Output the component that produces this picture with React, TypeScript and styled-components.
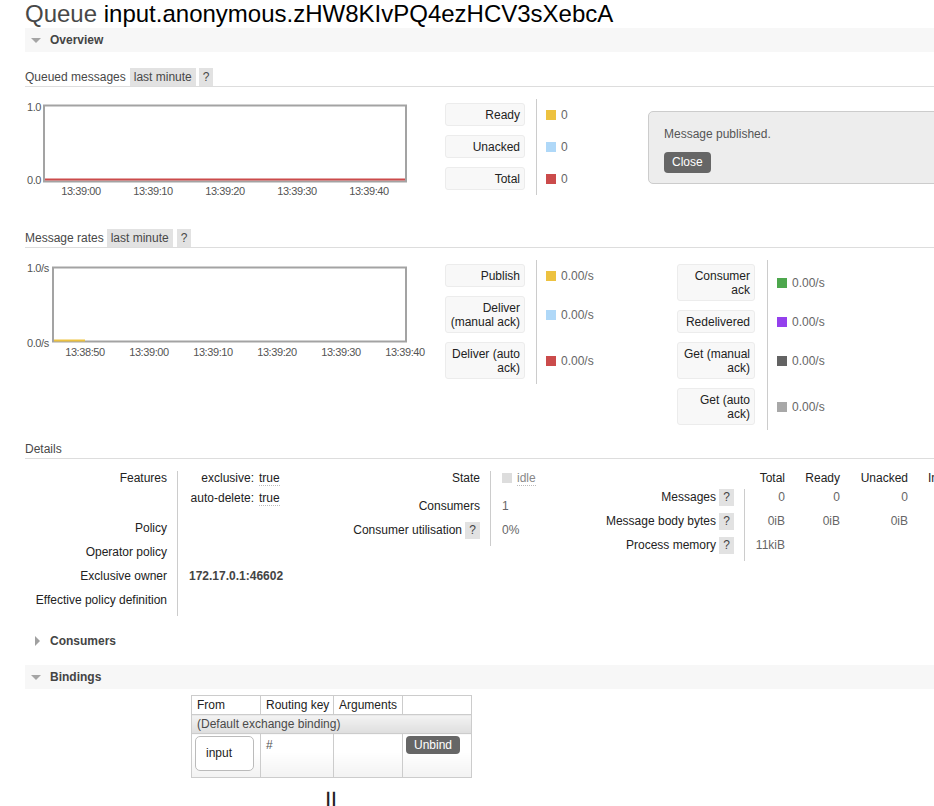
import React from 'react';
import styled, { createGlobalStyle, css } from 'styled-components';

const GlobalStyle = createGlobalStyle`
    html, body {
        margin: 0;
        padding: 0;
        overflow: hidden;
        background: #fff;
    }
    body {
        font-family: "Liberation Sans", Arial, Helvetica, sans-serif;
        font-size: 12px;
        color: #484848;
    }
`;

const Page = styled.div`
    position: relative;
    width: 1100px;
    height: 806px;
    padding-left: 25px;
    box-sizing: border-box;
`;

const Title = styled.h1`
    margin: 0;
    font-size: 24px;
    line-height: 28px;
    font-weight: normal;
    color: #484848;
    white-space: nowrap;
    b {
        font-weight: normal;
        color: #000;
    }
`;

const SectionHeader = styled.h2<{ $open?: boolean; $mt?: number }>`
    margin: ${(p) => p.$mt ?? 0}px 0 0;
    height: 24px;
    display: flex;
    align-items: center;
    background: ${(p) => (p.$open ? '#f7f7f7' : 'transparent')};
    font-size: 12px;
    font-weight: bold;
    color: #444;
`;

const Toggle = styled.span<{ $open?: boolean }>`
    width: 0;
    height: 0;
    ${(p) =>
        p.$open
            ? css`
                  margin: 1px 9px 0 6px;
                  border-left: 5px solid transparent;
                  border-right: 5px solid transparent;
                  border-top: 5px solid #a5a5a5;
              `
            : css`
                  margin: 0 10px;
                  border-top: 5px solid transparent;
                  border-bottom: 5px solid transparent;
                  border-left: 5px solid #a0a0a0;
              `}
`;

const SubHeader = styled.h3<{ $mt: number }>`
    margin: ${(p) => p.$mt}px 0 0;
    display: flex;
    height: 18px;
    line-height: 18px;
    font-size: 12px;
    font-weight: normal;
    color: #484848;
    border-bottom: 1px solid #ddd;
`;

const Pill = styled.span<{ $ml?: number }>`
    margin-left: ${(p) => p.$ml ?? 4}px;
    padding: 0 4px;
    background: #e2e2e2;
    color: #484848;
`;

const ChartRow = styled.div<{ $mt: number }>`
    margin-top: ${(p) => p.$mt}px;
    display: flex;
    align-items: flex-start;
`;

const ChartSvg = styled.svg`
    display: block;
    flex: none;
    font-family: "Liberation Sans", Arial, sans-serif;
    font-size: 11px;
    letter-spacing: -0.4px;
    fill: #545454;
`;

const Legend = styled.div<{ $label: number; $value?: number }>`
    display: grid;
    grid-template-columns: ${(p) => p.$label}px ${(p) => (p.$value ? `${p.$value}px` : 'auto')};
    flex: none;
`;

const KeyCell = styled.div`
    padding: 4px 0 5px;
`;

const KeyBox = styled.div<{ $w: number }>`
    box-sizing: border-box;
    width: ${(p) => p.$w}px;
    padding: 4px 4px 3px;
    border: 1px solid #ececec;
    border-radius: 3px;
    background: #f8f8f8;
    text-align: right;
    line-height: 14px;
    color: #222;
`;

const ValueCell = styled.div`
    border-left: 1px solid #ccc;
    padding: 4px 0 5px 9px;
    display: flex;
    align-items: center;
    gap: 5px;
    color: #666;
    line-height: 14px;
    white-space: nowrap;
`;

const Swatch = styled.span<{ $c: string }>`
    flex: none;
    width: 10px;
    height: 10px;
    background: ${(p) => p.$c};
`;

const Popup = styled.div`
    position: absolute;
    left: 648px;
    top: 111px;
    width: 320px;
    height: 73px;
    box-sizing: border-box;
    padding: 15px 15px 0;
    background: #ededed;
    border: 1px solid #ccc;
    border-radius: 5px;
    color: #555;
    p {
        margin: 0 0 11px;
        line-height: 14px;
    }
`;

const DarkButton = styled.button<{ $h: number }>`
    display: inline-block;
    height: ${(p) => p.$h}px;
    line-height: ${(p) => p.$h}px;
    padding: 0 8px;
    border: none;
    border-radius: 4px;
    background: #666;
    color: #fff;
    font-family: inherit;
    font-size: 12px;
`;

const FactsRow = styled.div`
    margin-top: 12px;
    display: flex;
    align-items: flex-start;
`;

const Facts = styled.div<{ $cols: string; $rows: string }>`
    display: grid;
    grid-template-columns: ${(p) => p.$cols};
    grid-template-rows: ${(p) => p.$rows};
    line-height: 14px;
    flex: none;
    white-space: nowrap;
`;

const FactLabel = styled.div<{ $pt?: number }>`
    display: flex;
    justify-content: flex-end;
    align-items: flex-start;
    gap: 3px;
    padding: ${(p) => p.$pt ?? 0}px 10px 0 0;
    color: #222;
`;

const FactValue = styled.div<{ $line?: boolean; $right?: boolean; $pt?: number }>`
    padding: ${(p) => p.$pt ?? 0}px ${(p) => (p.$right ? '10px 0 0' : '0 0 11px')};
    text-align: ${(p) => (p.$right ? 'right' : 'left')};
    border-left: ${(p) => (p.$line ? '1px solid #ccc' : 'none')};
    color: #666;
`;

const ColHead = styled.div<{ $left?: boolean }>`
    padding: ${(p) => (p.$left ? '0 0 0 10px' : '0 10px 0 0')};
    text-align: ${(p) => (p.$left ? 'left' : 'right')};
    color: #222;
`;

const Help = styled.span`
    display: inline-block;
    width: 15px;
    height: 17px;
    line-height: 17px;
    margin-top: -1px;
    text-align: center;
    background: #e2e2e2;
    color: #444;
`;

const FeatureList = styled.div`
    display: grid;
    grid-template-columns: 65px auto;
    column-gap: 5px;
    row-gap: 6px;
    span:nth-child(odd) {
        text-align: right;
        color: #222;
    }
`;

const Abbr = styled.span`
    color: #888;
    border-bottom: 1px dotted #bbb;
`;

const Owner = styled.b`
    color: #444;
`;

const StateDot = styled.span`
    display: inline-block;
    width: 10px;
    height: 10px;
    margin: 2px 5px 0 0;
    background: #ddd;
    vertical-align: top;
`;

const BindingsWrap = styled.div`
    margin: 6px 0 0 166px;
    width: 280px;
`;

const BindingsTable = styled.table`
    border-collapse: collapse;
    table-layout: fixed;
    width: 280px;
    border: 1px solid #ccc;
    line-height: 14px;
    th,
    td {
        border: 1px solid #ccc;
        padding: 2px 5px;
        text-align: left;
        vertical-align: top;
        font-weight: normal;
        white-space: nowrap;
    }
    th {
        color: #222;
    }
`;

const DefaultRow = styled.td`
    background: linear-gradient(#f3f3f3, #dedede);
    color: #4a4a4a;
`;

const BindingRow = styled.tr`
    height: 44px;
    td {
        padding: 2px 3px;
        background: linear-gradient(#fff 40%, #f2f2f2);
        color: #555;
    }
`;

const ExchangeBox = styled.div`
    box-sizing: border-box;
    width: 59px;
    height: 35px;
    line-height: 33px;
    padding-left: 10px;
    border: 1px solid #bbb;
    border-radius: 5px;
    background: #fff;
    color: #222;
`;

const RoutingKey = styled.div`
    padding: 2px 0 0 2px;
`;

const Arrow = styled.div`
    margin-top: 13px;
    text-align: center;
    font-family: "DejaVu Sans", sans-serif;
    font-size: 36px;
    line-height: 30px;
    color: #222;
`;

type ChartProps = {
    height: number;
    box: { x: number; y: number; w: number; h: number };
    yLabels: { label: string; y: number }[];
    ticks: { x: number; label: string }[];
    tickY: number;
    line: { x1: number; x2: number; y: number; color: string };
};

function Chart({ height, box, yLabels, ticks, tickY, line }: ChartProps) {
    return (
        <ChartSvg width={420} height={height} viewBox={`0 0 420 ${height}`}>
            <rect x={box.x} y={box.y} width={box.w} height={box.h} fill="#fff" stroke="#a3a3a3" strokeWidth={2} />
            <line x1={line.x1} x2={line.x2} y1={line.y} y2={line.y} stroke={line.color} strokeWidth={2} />
            {yLabels.map((l) => (
                <text key={l.label} x={2} y={l.y}>
                    {l.label}
                </text>
            ))}
            {ticks.map((t) => (
                <text key={t.label} x={t.x} y={tickY} textAnchor="middle">
                    {t.label}
                </text>
            ))}
        </ChartSvg>
    );
}

type LegendItem = { label: string; value: string; color: string };

function LegendTable({ items, label, box, value }: { items: LegendItem[]; label: number; box: number; value?: number }) {
    return (
        <Legend $label={label} $value={value}>
            {items.map((item) => (
                <React.Fragment key={item.label}>
                    <KeyCell>
                        <KeyBox $w={box}>{item.label}</KeyBox>
                    </KeyCell>
                    <ValueCell>
                        <Swatch $c={item.color} />
                        {item.value}
                    </ValueCell>
                </React.Fragment>
            ))}
        </Legend>
    );
}

const queued: LegendItem[] = [
    { label: 'Ready', value: '0', color: '#edc240' },
    { label: 'Unacked', value: '0', color: '#afd8f8' },
    { label: 'Total', value: '0', color: '#cb4b4b' },
];

const ratesLeft: LegendItem[] = [
    { label: 'Publish', value: '0.00/s', color: '#edc240' },
    { label: 'Deliver (manual ack)', value: '0.00/s', color: '#afd8f8' },
    { label: 'Deliver (auto ack)', value: '0.00/s', color: '#cb4b4b' },
];

const ratesRight: LegendItem[] = [
    { label: 'Consumer ack', value: '0.00/s', color: '#4da74d' },
    { label: 'Redelivered', value: '0.00/s', color: '#9440ed' },
    { label: 'Get (manual ack)', value: '0.00/s', color: '#636363' },
    { label: 'Get (auto ack)', value: '0.00/s', color: '#a8a8a8' },
];

const statColumns = ['Total', 'Ready', 'Unacked', 'In memory', 'Persistent', 'Transient'];
const statRows = [
    { label: 'Messages', values: ['0', '0', '0', '0', '0', '0'] },
    { label: 'Message body bytes', values: ['0iB', '0iB', '0iB', '0iB', '0iB', '0iB'] },
    { label: 'Process memory', values: ['11kiB', '', '', '', '', ''] },
];

function App() {
    return (
        <Page>
            <GlobalStyle />
            <Title>
                Queue <b>input.anonymous.zHW8KIvPQ4ezHCV3sXebcA</b>
            </Title>

            <SectionHeader $open>
                <Toggle $open />
                Overview
            </SectionHeader>

            <SubHeader $mt={16}>
                Queued messages
                <Pill>last minute</Pill>
                <Pill $ml={3}>?</Pill>
            </SubHeader>
            <ChartRow $mt={12}>
                <Chart
                    height={96}
                    box={{ x: 19, y: 6.5, w: 362, h: 76 }}
                    yLabels={[
                        { label: '1.0', y: 12 },
                        { label: '0.0', y: 85 },
                    ]}
                    ticks={[
                        { x: 56, label: '13:39:00' },
                        { x: 128, label: '13:39:10' },
                        { x: 200, label: '13:39:20' },
                        { x: 272, label: '13:39:30' },
                        { x: 344, label: '13:39:40' },
                    ]}
                    tickY={95.5}
                    line={{ x1: 20, x2: 380, y: 80.5, color: '#cb4b4b' }}
                />
                <LegendTable items={queued} label={91} box={80} />
            </ChartRow>

            <SubHeader $mt={34}>
                Message rates
                <Pill $ml={3}>last minute</Pill>
                <Pill>?</Pill>
            </SubHeader>
            <ChartRow $mt={12}>
                <Chart
                    height={100}
                    box={{ x: 28, y: 7.5, w: 353, h: 74 }}
                    yLabels={[
                        { label: '1.0/s', y: 12 },
                        { label: '0.0/s', y: 86.5 },
                    ]}
                    ticks={[
                        { x: 60, label: '13:38:50' },
                        { x: 124, label: '13:39:00' },
                        { x: 188, label: '13:39:10' },
                        { x: 252, label: '13:39:20' },
                        { x: 316, label: '13:39:30' },
                        { x: 380, label: '13:39:40' },
                    ]}
                    tickY={96}
                    line={{ x1: 29, x2: 60, y: 80.5, color: '#edc240' }}
                />
                <LegendTable items={ratesLeft} label={91} box={80} value={141} />
                <LegendTable items={ratesRight} label={90} box={78} />
            </ChartRow>

            <SubHeader $mt={10}>Details</SubHeader>
            <FactsRow>
                <Facts $cols="152px 148px" $rows="49px 24px 24px 24px 24px">
                    <FactLabel>Features</FactLabel>
                    <FactValue $line>
                        <FeatureList>
                            <span>exclusive:</span>
                            <span>
                                <Abbr>true</Abbr>
                            </span>
                            <span>auto-delete:</span>
                            <span>
                                <Abbr>true</Abbr>
                            </span>
                        </FeatureList>
                    </FactValue>
                    <FactLabel $pt={1}>Policy</FactLabel>
                    <FactValue $line />
                    <FactLabel $pt={1}>Operator policy</FactLabel>
                    <FactValue $line />
                    <FactLabel $pt={1}>Exclusive owner</FactLabel>
                    <FactValue $line $pt={1}>
                        <Owner>172.17.0.1:46602</Owner>
                    </FactValue>
                    <FactLabel $pt={1}>Effective policy definition</FactLabel>
                    <FactValue $line />
                </Facts>

                <Facts $cols="165px 70px" $rows="27px 24px 24px">
                    <FactLabel>State</FactLabel>
                    <FactValue $line>
                        <StateDot />
                        <Abbr>idle</Abbr>
                    </FactValue>
                    <FactLabel $pt={1}>Consumers</FactLabel>
                    <FactValue $line $pt={1}>
                        1
                    </FactValue>
                    <FactLabel $pt={1}>
                        Consumer utilisation <Help>?</Help>
                    </FactLabel>
                    <FactValue $line $pt={1}>
                        0%
                    </FactValue>
                </Facts>

                <Facts $cols="184px 51px 55px 68px 80px 80px 80px" $rows="18px 24px 24px 24px">
                    <div />
                    {statColumns.map((c, i) => (
                        <ColHead key={c} $left={i === 3}>
                            {c}
                        </ColHead>
                    ))}
                    {statRows.map((row) => (
                        <React.Fragment key={row.label}>
                            <FactLabel $pt={1}>
                                {row.label} <Help>?</Help>
                            </FactLabel>
                            {row.values.map((v, i) => (
                                <FactValue key={i} $right $line={i === 0} $pt={1}>
                                    {v}
                                </FactValue>
                            ))}
                        </React.Fragment>
                    ))}
                </Facts>
            </FactsRow>

            <SectionHeader $mt={13}>
                <Toggle />
                Consumers
            </SectionHeader>

            <SectionHeader $open $mt={12}>
                <Toggle $open />
                Bindings
            </SectionHeader>

            <BindingsWrap>
                <BindingsTable>
                    <colgroup>
                        <col style={{ width: 69 }} />
                        <col style={{ width: 73 }} />
                        <col style={{ width: 69 }} />
                        <col style={{ width: 69 }} />
                    </colgroup>
                    <thead>
                        <tr>
                            <th>From</th>
                            <th>Routing key</th>
                            <th>Arguments</th>
                            <th />
                        </tr>
                    </thead>
                    <tbody>
                        <tr>
                            <DefaultRow colSpan={4}>(Default exchange binding)</DefaultRow>
                        </tr>
                        <BindingRow>
                            <td>
                                <ExchangeBox>input</ExchangeBox>
                            </td>
                            <td>
                                <RoutingKey>#</RoutingKey>
                            </td>
                            <td />
                            <td>
                                <DarkButton $h={18}>Unbind</DarkButton>
                            </td>
                        </BindingRow>
                    </tbody>
                </BindingsTable>
                <Arrow>⇓</Arrow>
            </BindingsWrap>

            <Popup>
                <p>Message published.</p>
                <DarkButton $h={21}>Close</DarkButton>
            </Popup>
        </Page>
    );
}

export default App;
